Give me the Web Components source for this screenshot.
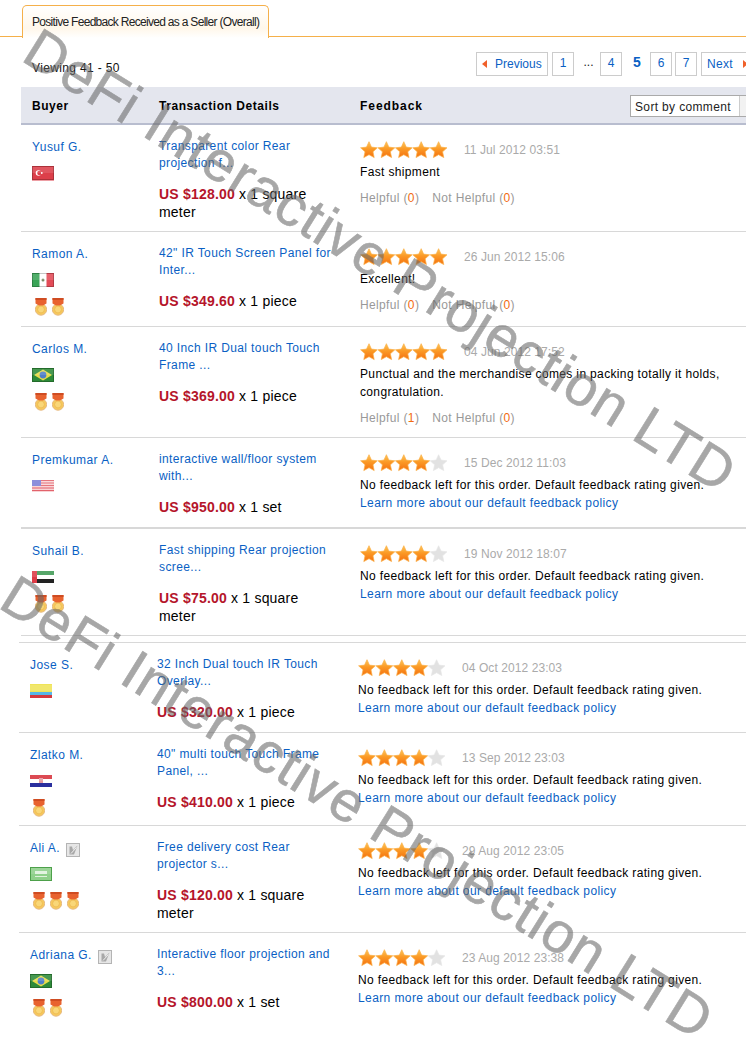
<!DOCTYPE html>
<html>
<head>
<meta charset="utf-8">
<title>Feedback</title>
<style>
  html, body { margin: 0; padding: 0; background: #fff; overflow: hidden; height: 1040px; }
  body { font: 12px/18px "Liberation Sans", Arial, sans-serif; color: #000; position: relative; }
  .second { margin-left: -2px; margin-top: 6px; }
</style>
</head>
<body>

<fb-tabs>Positive Feedback Received as a Seller (Overall)</fb-tabs>
<fb-toolbar></fb-toolbar>
<fb-head></fb-head>

<section>
  <fb-row name="Yusuf G." flag="tr" price="US $128.00" unit="x 1 square|meter" stars="5" date="11 Jul 2012 03:51" h="107" title-text="Transparent color Rear|projection f...">
    <div>Fast shipment</div>
    <fb-helpful yes="0" no="0"></fb-helpful>
  </fb-row>
  <fb-row name="Ramon A." flag="mx" medals="2" price="US $349.60" unit="x 1 piece" stars="5" date="26 Jun 2012 15:06" h="95" title-text="42&quot; IR Touch Screen Panel for|Inter...">
    <div>Excellent!</div>
    <fb-helpful yes="0" no="0"></fb-helpful>
  </fb-row>
  <fb-row name="Carlos M." flag="br" medals="2" price="US $369.00" unit="x 1 piece" stars="5" date="04 Jun 2012 17:52" h="111" title-text="40 Inch IR Dual touch Touch|Frame ...">
    <div>Punctual and the merchandise comes in packing totally it holds, congratulation.</div>
    <fb-helpful yes="1" no="0"></fb-helpful>
  </fb-row>
  <fb-row name="Premkumar A." flag="us" price="US $950.00" unit="x 1 set" stars="4" date="15 Dec 2012 11:03" h="91" heavy title-text="interactive wall/floor system|with...">
    <fb-default></fb-default>
  </fb-row>
  <fb-row name="Suhail B." flag="ae" medals="2" price="US $75.00" unit="x 1 square|meter" stars="4" date="19 Nov 2012 18:07" h="107" title-text="Fast shipping Rear projection|scree...">
    <fb-default></fb-default>
  </fb-row>
</section>

<section class="second">
  <fb-row name="Jose S." flag="co" price="US $320.00" unit="x 1 piece" stars="4" date="04 Oct 2012 23:03" h="91" topline title-text="32 Inch Dual touch IR Touch|Overlay...">
    <fb-default></fb-default>
  </fb-row>
  <fb-row name="Zlatko M." flag="hr" medals="1" price="US $410.00" unit="x 1 piece" stars="4" date="13 Sep 2012 23:03" h="93" title-text="40&quot; multi touch Touch Frame|Panel, ...">
    <fb-default></fb-default>
  </fb-row>
  <fb-row name="Ali A." verified flag="sa" medals="3" price="US $120.00" unit="x 1 square|meter" stars="4" date="29 Aug 2012 23:05" h="107" title-text="Free delivery cost Rear|projector s...">
    <fb-default></fb-default>
  </fb-row>
  <fb-row name="Adriana G." verified flag="br" medals="2" price="US $800.00" unit="x 1 set" stars="4" date="23 Aug 2012 23:38" h="107" last title-text="Interactive floor projection and|3...">
    <fb-default></fb-default>
  </fb-row>
</section>

<fb-watermark style="left:45px;top:19px"></fb-watermark>
<fb-watermark style="left:22px;top:566px"></fb-watermark>

<script>
// Pestaña superior con la línea naranja
class FbTabs extends HTMLElement {
  constructor() {
    super();
    this.attachShadow({ mode: 'open' });
  }
  connectedCallback() {
    this.shadowRoot.innerHTML = `
      <style>
        :host { display: block; height: 31px; margin-top: 5px; padding-left: 22px; border-bottom: 1px solid #f5b04a; }
        div {
          box-sizing: border-box; width: 247px; height: 33px;
          padding-left: 9px; line-height: 32px; font-size: 12px; letter-spacing: -.7px; color: #222; white-space: nowrap;
          border: 1px solid #f5b04a; border-bottom: 0; border-radius: 5px 5px 0 0;
          background: linear-gradient(#fff, #fff7ea 70%, #fff);
        }
      </style>
      <div><slot></slot></div>`;
  }
}

// Texto de "Viewing" y paginación
class FbToolbar extends HTMLElement {
  constructor() {
    super();
    this.attachShadow({ mode: 'open' });
  }
  connectedCallback() {
    this.shadowRoot.innerHTML = `
      <style>
        :host { display: flex; align-items: flex-start; height: 50px; padding-left: 32px; width: 760px; box-sizing: border-box; }
        .view { margin-top: 22px; letter-spacing: .35px; color: #111; flex: none; width: 444px; }
        nav { display: flex; margin-top: 15px; color: #0a5fc4; }
        nav span { box-sizing: border-box; height: 24px; line-height: 21px; text-align: center; }
        .box { border: 1px solid #ccc; width: 22px; margin-right: 3px; }
        .prev { width: 72px; margin-right: 4px; display: flex; align-items: center; padding-left: 5px; gap: 8px; }
        .next { width: 60px; margin-left: 1px; display: flex; align-items: center; padding-left: 5px; gap: 10px; letter-spacing: .3px; }
        .dots { width: 23px; color: #222; margin-right: 0; }
        .cur { width: 24px; margin-right: 1px; font-weight: bold; font-size: 14px; line-height: 20px !important; }
        i { display: block; width: 0; height: 0; border: 4px solid transparent; border-left-width: 0; border-right: 5px solid #f0602a; }
        .next i { border-right-width: 0; border-left: 5px solid #f0602a; }
      </style>
      <div class="view">Viewing 41 - 50</div>
      <nav>
        <span class="box prev"><i></i>Previous</span>
        <span class="box">1</span>
        <span class="dots">...</span>
        <span class="box">4</span>
        <span class="cur">5</span>
        <span class="box">6</span>
        <span class="box">7</span>
        <span class="box next">Next<i></i></span>
      </nav>`;
  }
}

// Cabecera de la tabla
class FbHead extends HTMLElement {
  constructor() {
    super();
    this.attachShadow({ mode: 'open' });
  }
  connectedCallback() {
    this.shadowRoot.innerHTML = `
      <style>
        :host { display: grid; grid-template-columns: 127px 201px 270px 1fr; align-items: center; box-sizing: border-box;
          height: 38px; margin-left: 21px; padding: 1px 0 0 11px; background: #e4e6ee; border-bottom: 2px solid #b8bdcf;
          font-weight: bold; letter-spacing: .55px; white-space: nowrap; }
        .fb { letter-spacing: .95px; }
        .sort { box-sizing: border-box; width: 130px; height: 22px; background: #fff; border: 1px solid #aaa;
          font-weight: normal; letter-spacing: .35px; line-height: 22px; padding-left: 4px; color: #222; display: flex; }
        .sort b { margin-left: 8px; flex: none; border-left: 1px solid #ccc; width: 20px; background: #f2f2f2; }
      </style>
      <div>Buyer</div>
      <div>Transaction Details</div>
      <div class="fb">Feedback</div>
      <div class="sort">Sort by comment<b></b></div>`;
  }
}

// Fila de un comentario
class FbRow extends HTMLElement {
  constructor() {
    super();
    this.attachShadow({ mode: 'open' });
  }
  connectedCallback() {
    const a = n => this.getAttribute(n) || '';
    const titulo = a('title-text').split('|').join('<br>');
    const unidad = a('unit').split('|').map(t => `<span>${t}</span>`).join('<br>');
    const medallas = '<fb-medal></fb-medal>'.repeat(Number(a('medals') || 0));
    const linea = this.hasAttribute('heavy') ? '2px' : '1px';
    this.shadowRoot.innerHTML = `
      <style>
        :host { display: grid; grid-template-columns: 127px 201px 1fr; box-sizing: border-box;
          height: ${a('h')}px; margin-left: 21px; padding: 13px 0 0 11px;
          border-bottom: ${this.hasAttribute('last') ? '0' : linea + ' solid #d8d8d8'};
          ${this.hasAttribute('topline') ? 'border-top: 1px solid #d8d8d8;' : ''}
          letter-spacing: .35px; }
        a { color: #0a5fc4; text-decoration: none; }
        .name { display: flex; align-items: center; gap: 6px; height: 17px; line-height: 17px; margin-top: 1px; letter-spacing: .45px; }
        .name + fb-flag { margin-top: 10px; }
        .medals { display: flex; gap: 5px; padding-left: 3px; margin-top: 11px; }
        .title { display: block; width: 185px; line-height: 17px; letter-spacing: .38px; }
        .price { font-size: 14px; line-height: 18px; margin-top: 13px; width: 165px; letter-spacing: .2px; }
        .price b { color: #b5152b; }
        .top { display: flex; align-items: center; height: 17px; margin-top: 3px; }
        .date { color: #aaa; margin-left: 16px; letter-spacing: .08px; }
        .fb { width: 376px; margin-top: 5px; }
      </style>
      <div>
        <div class="name"><a>${a('name')}</a>${this.hasAttribute('verified') ? '<fb-verified></fb-verified>' : ''}</div>
        <fb-flag code="${a('flag')}"></fb-flag>
        <div class="medals">${medallas}</div>
      </div>
      <div>
        <a class="title">${titulo}</a>
        <div class="price"><b>${a('price')}</b> ${unidad}</div>
      </div>
      <div>
        <div class="top"><fb-stars value="${a('stars')}"></fb-stars><span class="date">${a('date')}</span></div>
        <div class="fb"><slot></slot></div>
      </div>`;
  }
}

// Votos de utilidad
class FbHelpful extends HTMLElement {
  constructor() {
    super();
    this.attachShadow({ mode: 'open' });
  }
  connectedCallback() {
    const si = this.getAttribute('yes');
    const no = this.getAttribute('no');
    this.shadowRoot.innerHTML = `
      <style>
        :host { display: block; color: #999; margin-top: 8px; }
        b { font-weight: normal; color: #f26a10; }
        span { margin-left: 13px; }
      </style>
      Helpful (<b>${si}</b>)<span>Not Helpful (<b>${no}</b>)</span>`;
  }
}

// Texto por defecto cuando no hay comentario
class FbDefault extends HTMLElement {
  constructor() {
    super();
    this.attachShadow({ mode: 'open' });
  }
  connectedCallback() {
    this.shadowRoot.innerHTML = `
      <style>
        :host { display: block; }
        a { display: block; color: #0a5fc4; letter-spacing: .4px; }
      </style>
      No feedback left for this order. Default feedback rating given.
      <a>Learn more about our default feedback policy</a>`;
  }
}

// Estrellas de valoración
class FbStars extends HTMLElement {
  constructor() {
    super();
    this.attachShadow({ mode: 'open' });
  }
  connectedCallback() {
    const n = Number(this.getAttribute('value'));
    let s = '';
    for (let i = 0; i < 5; i++) {
      const on = i < n;
      s += `<path transform="translate(${i * 17.4} 0)" fill="${on ? 'url(#g)' : '#e2e2e2'}" stroke="${on ? '#fbb24a' : '#e6e6e6'}" stroke-width=".7" stroke-linejoin="round"
        d="M9 .7 11.47 6.1 17.4 6.8 13 10.8 14.2 16.6 9 13.7 3.8 16.6 5 10.8 .6 6.8 6.53 6.1z"/>`;
    }
    this.shadowRoot.innerHTML = `
      <style>:host { display: block; width: 88px; height: 18px; } svg { display: block; }</style>
      <svg width="88" height="18" viewBox="0 0 88 18">
        <defs><linearGradient id="g" x1="0" y1="0" x2="0" y2="1">
          <stop offset="0" stop-color="#fdc65a"/><stop offset=".45" stop-color="#fb9a26"/><stop offset="1" stop-color="#f4700f"/>
        </linearGradient></defs>${s}
      </svg>`;
  }
}

// Banderas dibujadas en SVG
const FLAGS = {
  tr: `<rect width="22" height="14.5" fill="#dc3f4a"/><circle cx="6.5" cy="7" r="2.8" fill="#fff"/><circle cx="7.5" cy="7" r="2.3" fill="#dc3f4a"/><circle cx="9.8" cy="7" r=".9" fill="#fff"/>`,
  mx: `<rect width="22" height="14" fill="#fff"/><rect width="7.5" height="14" fill="#3aa457"/><rect x="14.5" width="7.5" height="14" fill="#e34b57"/><circle cx="11" cy="7" r="1.5" fill="#7c8a66"/>`,
  br: `<rect width="22" height="14" fill="#2d8a38"/><path d="M11 1.5 20 7l-9 5.5L2 7z" fill="#e8dc4a"/><circle cx="11" cy="7" r="3.4" fill="#4f7fc8"/>`,
  us: `<rect width="22" height="12" y="1" fill="#f9d3d5"/><path d="M0 1.5h22M0 4h22M0 6.5h22M0 9h22M0 11.5h22" stroke="#e2636c" stroke-width="1.1"/><rect width="9" height="6" y="1" fill="#7d7fd6"/>`,
  ae: `<rect width="22" height="4" y="1" fill="#3f9a55"/><rect width="22" height="4" y="5" fill="#fff"/><rect width="22" height="4" y="9" fill="#222"/><rect width="5" height="12" y="1" fill="#dd3b46"/>`,
  co: `<rect width="22" height="8" fill="#efe458"/><rect width="22" height="3" y="8" fill="#56b6e8"/><rect width="22" height="3" y="11" fill="#d43a3e"/>`,
  hr: `<rect width="22" height="4" y="1" fill="#d8323c"/><rect width="22" height="4" y="5" fill="#fff"/><rect width="22" height="4" y="9" fill="#2a2f9e"/><rect x="9" y="4" width="4" height="5" fill="#e59aa0"/>`,
  sa: `<rect width="22" height="14" fill="#8fd08a"/><rect x="5" y="4" width="12" height="3" fill="#dff2dc"/><rect x="5" y="9" width="12" height="1" fill="#dff2dc"/>`
};

class FbFlag extends HTMLElement {
  constructor() {
    super();
    this.attachShadow({ mode: 'open' });
  }
  connectedCallback() {
    const code = this.getAttribute('code');
    const conMarco = code !== 'us' && code !== 'ae' && code !== 'hr' && code !== 'co';
    const marco = code === 'sa' ? '#4da04a' : 'rgba(0,0,0,.22)';
    this.shadowRoot.innerHTML = `
      <style>:host { display: block; width: 22px; height: 14px; } svg { display: block; overflow: visible; }</style>
      <svg width="22" height="14" viewBox="0 0 22 14">${FLAGS[code]}
        <rect width="22" height="6" y="1" fill="#fff" opacity=".12"/>
        ${conMarco ? `<rect x=".5" y=".5" width="21" height="13" fill="none" stroke="${marco}"/>` : ''}</svg>`;
  }
}

// Medalla de nivel del comprador
class FbMedal extends HTMLElement {
  constructor() {
    super();
    this.attachShadow({ mode: 'open' });
  }
  connectedCallback() {
    this.shadowRoot.innerHTML = `
      <style>:host { display: block; width: 12px; height: 18px; } svg { display: block; }</style>
      <svg width="12" height="18" viewBox="0 0 12 18">
        <circle cx="6" cy="11.5" r="5.7" fill="#f6c95c" stroke="#e6b982"/>
        <circle cx="6" cy="11.5" r="3.4" fill="#f9d778" stroke="#eab04a" stroke-width=".6"/>
        <path d="M.5 0h11v5.5L8 7.500H4L.5 5.5z" fill="#e8622f"/>
        <rect x=".5" y="0" width="11" height="2" fill="#cf4c22"/>
      </svg>`;
  }
}

// Icono gris de comprador verificado
class FbVerified extends HTMLElement {
  constructor() {
    super();
    this.attachShadow({ mode: 'open' });
  }
  connectedCallback() {
    this.shadowRoot.innerHTML = `
      <style>:host { display: block; width: 14px; height: 14px; margin-top: 3px; } svg { display: block; }</style>
      <svg width="14" height="14" viewBox="0 0 14 14">
        <rect x=".5" y=".5" width="13" height="13" fill="#e6e6e6" stroke="#b4b4b4"/>
        <path d="M3.5 3.5 6 3.5 7 7 11.5 2.500 8 11.5 3.5 11.5z" fill="#a8a8a8"/>
        <path d="M5 10.5 10.5 4.5" stroke="#f2f2f2" stroke-width="1"/>
      </svg>`;
  }
}

// Marca de agua girada que queda encima de la tabla
class FbWatermark extends HTMLElement {
  constructor() {
    super();
    this.attachShadow({ mode: 'open' });
  }
  connectedCallback() {
    this.shadowRoot.innerHTML = `
      <style>
        :host { position: absolute; display: block; white-space: nowrap; pointer-events: none;
          transform-origin: 0 0; transform: rotate(31.8deg); opacity: .58;
          font: 57px/57px "Liberation Sans", Arial, sans-serif; letter-spacing: 1.2px; color: #686868;
          -webkit-text-stroke: .6px #686868; }
      </style>
      DeFi Interactive Projection LTD`;
  }
}

customElements.define('fb-tabs', FbTabs);
customElements.define('fb-toolbar', FbToolbar);
customElements.define('fb-head', FbHead);
customElements.define('fb-helpful', FbHelpful);
customElements.define('fb-default', FbDefault);
customElements.define('fb-stars', FbStars);
customElements.define('fb-flag', FbFlag);
customElements.define('fb-medal', FbMedal);
customElements.define('fb-verified', FbVerified);
customElements.define('fb-row', FbRow);
customElements.define('fb-watermark', FbWatermark);
</script>
</body>
</html>
